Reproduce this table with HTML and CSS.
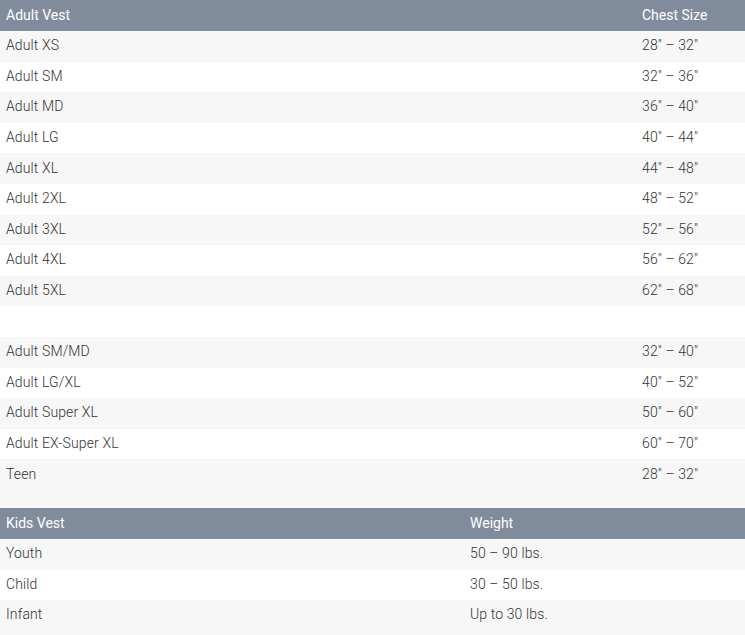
FILE: index.html
```html
<!DOCTYPE html>
<html lang="en">
<head>
<meta charset="utf-8">
<title>Vest Sizes</title>
<link rel="stylesheet" href="styles.css">
</head>
<body>
<table class="size-table adult">
  <colgroup><col class="c1"><col class="c2"></colgroup>
  <thead>
    <tr><th>Adult Vest</th><th>Chest Size</th></tr>
  </thead>
  <tbody>
    <tr><td>Adult XS</td><td>28" – 32"</td></tr>
    <tr><td>Adult SM</td><td>32" – 36"</td></tr>
    <tr><td>Adult MD</td><td>36" – 40"</td></tr>
    <tr><td>Adult LG</td><td>40" – 44"</td></tr>
    <tr><td>Adult XL</td><td>44" – 48"</td></tr>
    <tr><td>Adult 2XL</td><td>48" – 52"</td></tr>
    <tr><td>Adult 3XL</td><td>52" – 56"</td></tr>
    <tr><td>Adult 4XL</td><td>56" – 62"</td></tr>
    <tr><td>Adult 5XL</td><td>62" – 68"</td></tr>
    <tr><td>&nbsp;</td><td></td></tr>
    <tr><td>Adult SM/MD</td><td>32" – 40"</td></tr>
    <tr><td>Adult LG/XL</td><td>40" – 52"</td></tr>
    <tr><td>Adult Super XL</td><td>50" – 60"</td></tr>
    <tr><td>Adult EX-Super XL</td><td>60" – 70"</td></tr>
    <tr><td>Teen</td><td>28" – 32"</td></tr>
  </tbody>
</table>
<table class="size-table kids">
  <colgroup><col class="c1"><col class="c2"></colgroup>
  <thead>
    <tr><th>Kids Vest</th><th>Weight</th></tr>
  </thead>
  <tbody>
    <tr><td>Youth</td><td>50 – 90 lbs.</td></tr>
    <tr><td>Child</td><td>30 – 50 lbs.</td></tr>
    <tr><td>Infant</td><td>Up to 30 lbs.</td></tr>
  </tbody>
</table>
</body>
</html>
```

FILE: styles.css
```css
html, body {
  margin: 0;
  padding: 0;
  background: #f7f7f7;
}
body {
  font-family: Roboto, "Liberation Sans", Arial, sans-serif;
  font-size: 14px;
  color: #333333;
}
.size-table {
  width: 100%;
  border-collapse: collapse;
  table-layout: fixed;
}
.size-table.adult {
  margin-bottom: 18px;
}
.adult .c1 { width: 636px; }
.kids .c1 { width: 464px; }
.size-table th,
.size-table td {
  text-align: left;
  line-height: 20px;
  vertical-align: middle;
  white-space: nowrap;
}
.size-table th {
  background: #808c9c;
  color: #ffffff;
  font-weight: 400;
  padding: 5px 6px 6px;
}
.size-table td {
  font-weight: 300;
  letter-spacing: 0.12px;
  padding: 4.3px 6px 6.3px;
}
.size-table tbody tr:nth-child(odd) td {
  background: #f7f7f7;
}
.size-table tbody tr:nth-child(even) td {
  background: #ffffff;
}
```
